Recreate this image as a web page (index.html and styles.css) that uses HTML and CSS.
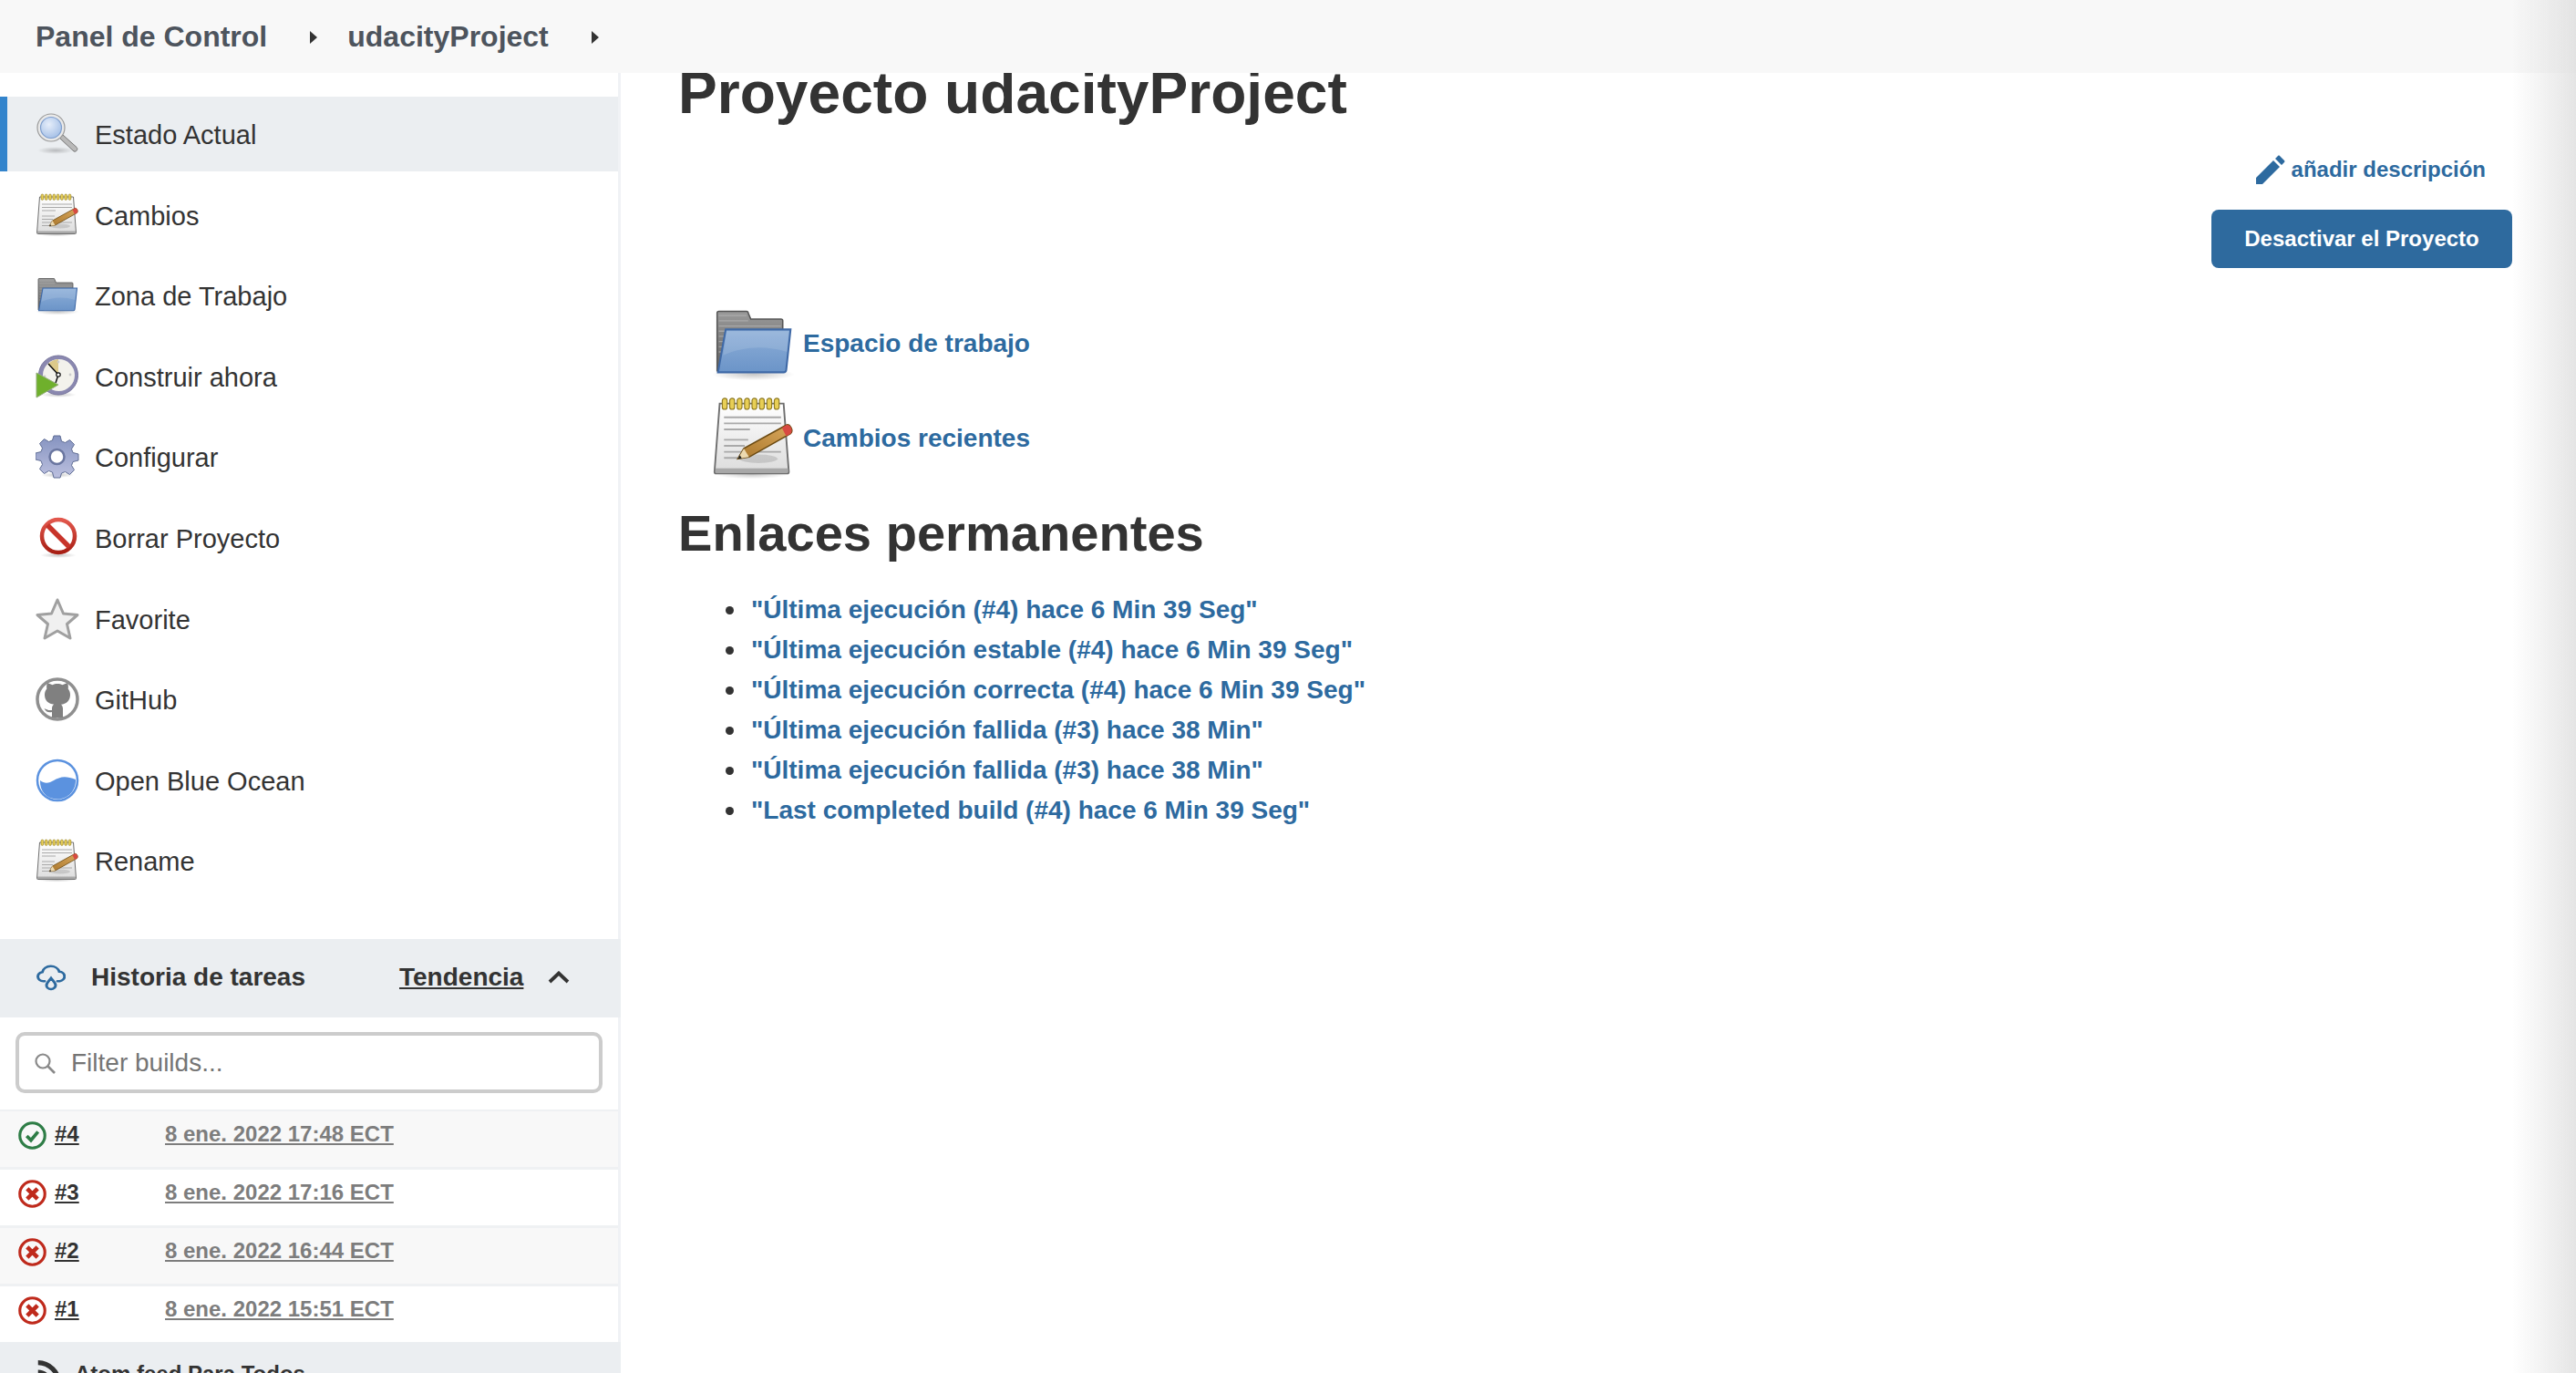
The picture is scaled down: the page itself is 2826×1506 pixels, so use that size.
FILE: index.html
```html
<!DOCTYPE html>
<html lang="es">
<head>
<meta charset="utf-8">
<title>udacityProject</title>
<link rel="stylesheet" href="styles.css">
</head>
<body>
<svg class="defs" width="0" height="0" aria-hidden="true">
  <defs>
    <linearGradient id="gFolder" x1="0" y1="0" x2="0" y2="1"><stop offset="0" stop-color="#8eafd8"/><stop offset="1" stop-color="#6b94c8"/></linearGradient>
    <linearGradient id="gBack" x1="0" y1="0" x2="0" y2="1"><stop offset="0" stop-color="#9a9a9a"/><stop offset="1" stop-color="#5f5f5f"/></linearGradient>
    <linearGradient id="gPaper" x1="0" y1="0" x2="0" y2="1"><stop offset="0" stop-color="#fff"/><stop offset="1" stop-color="#dcdcdc"/></linearGradient>
    <linearGradient id="gPencil" x1="0" y1="1" x2="1" y2="0"><stop offset="0" stop-color="#a9762c"/><stop offset="1" stop-color="#d9a85c"/></linearGradient>
    <linearGradient id="gGear" x1="0" y1="0" x2="0" y2="1"><stop offset="0" stop-color="#8593c0"/><stop offset="1" stop-color="#bcc0df"/></linearGradient>
    <linearGradient id="gRed" x1="0" y1="0" x2="0" y2="1"><stop offset="0" stop-color="#e2574c"/><stop offset="1" stop-color="#a81f14"/></linearGradient>
    <radialGradient id="gLens" cx=".4" cy=".35" r=".7"><stop offset="0" stop-color="#e6eefa"/><stop offset="1" stop-color="#a4bfe6"/></radialGradient>
    <radialGradient id="gShadow"><stop offset="0" stop-color="#000" stop-opacity=".22"/><stop offset="1" stop-color="#000" stop-opacity="0"/></radialGradient>
    <symbol id="i-notepad" viewBox="0 0 48 48">
      <ellipse cx="23" cy="45" rx="21" ry="2.6" fill="url(#gShadow)"/>
      <path d="M4.5 4h37l3 39.5a1 1 0 0 1-1 1H2.500a1 1 0 0 1-1-1z" fill="url(#gPaper)" stroke="#6f6f6f" stroke-width="1"/>
      <rect x="2" y="41.500" width="42" height="2.500" fill="#a8a8a8"/>
      <g fill="#e8cf55" stroke="#8f7a20" stroke-width=".6">
        <rect x="6" y="1" width="2.800" height="6.400" rx="1.400"/><rect x="10.300" y="1" width="2.800" height="6.400" rx="1.400"/><rect x="14.600" y="1" width="2.800" height="6.400" rx="1.400"/><rect x="18.900" y="1" width="2.800" height="6.400" rx="1.400"/><rect x="23.200" y="1" width="2.800" height="6.400" rx="1.400"/><rect x="27.500" y="1" width="2.800" height="6.400" rx="1.400"/><rect x="31.800" y="1" width="2.800" height="6.400" rx="1.400"/><rect x="36.100" y="1" width="2.800" height="6.400" rx="1.400"/>
      </g>
      <path d="M7 12h33M7 15.500h33M7 19h15M7 25h14M7 28.500h12M7 32h33M7 35.500h8" stroke="#a9a9a9" stroke-width="1" fill="none"/>
      <ellipse cx="27" cy="36" rx="11" ry="2.500" fill="#000" opacity=".12"/>
      <path d="M15 36l3.500-6L43 16.500c2-1 4.500 3 2.500 5L21.500 35z" fill="url(#gPencil)" stroke="#6b4a12" stroke-width=".8"/>
      <path d="M15 36l3.500-6 3 5z" fill="#ecd9b0"/>
      <path d="M15 36l1.200-2.100 1.100 1.800z" fill="#222"/>
      <path d="M40.500 18l2.500-1.500c2-1 4.500 3 2.500 5L43 23z" fill="#d84a42"/>
    </symbol>
    <symbol id="i-folder" viewBox="0 0 48 48">
      <ellipse cx="24" cy="42" rx="24" ry="3.500" fill="url(#gShadow)"/>
      <path d="M3 40V6.500a1 1 0 0 1 1-1h16a1 1 0 0 1 1 1l1.500 3.500h17.500a1 1 0 0 1 1 1V22L8 40.500z" fill="url(#gBack)" stroke="#555" stroke-width=".8"/>
      <path d="M4 8h16M4 11h17M4 14h36M4 17h36M4 20h36M4 23h24M4 26h18M4 29h10" stroke="#b5b5b5" stroke-width=".7" opacity=".7"/>
      <path d="M8 16h37.500L43 39.500a1.500 1.500 0 0 1-1.500 1.300H3.500z" fill="url(#gFolder)" stroke="#3f69a6" stroke-width="1.100"/>
      <path d="M8.500 17h36l-1 12C30 25 18 26 6.500 31z" fill="#fff" opacity=".12"/>
    </symbol>
    <symbol id="i-search-lens" viewBox="0 0 48 48">
      <ellipse cx="22" cy="42" rx="20" ry="4" fill="url(#gShadow)"/>
      <path d="M26 28l4-3 15 13.500c2 2 0 5.500-3 4.500z" fill="#b9b9b9" stroke="#777" stroke-width="1"/>
      <circle cx="17" cy="17" r="15" fill="#e9e9e9" stroke="#9a9a9a" stroke-width="1.200"/>
      <circle cx="17" cy="17" r="11.500" fill="url(#gLens)" stroke="#7f9fce" stroke-width="1.200"/>
    </symbol>
    <symbol id="i-check" viewBox="0 0 30 30"><circle cx="15" cy="15" r="13.300" fill="none" stroke="#2e7d46" stroke-width="3"/><path d="M9 15.500l4.500 4.500 7.500-9" fill="none" stroke="#2e7d46" stroke-width="3.600"/></symbol>
    <symbol id="i-cross" viewBox="0 0 30 30"><circle cx="15" cy="15" r="13.300" fill="none" stroke="#bf2a1c" stroke-width="3"/><path d="M9.500 9.500l11 11M20.500 9.500l-11 11" fill="none" stroke="#bf2a1c" stroke-width="4.400"/></symbol>
  </defs>
</svg>

<header class="topbar">
  <a class="crumb">Panel de Control</a>
  <span class="crumb-arrow"></span>
  <a class="crumb crumb-project">udacityProject</a>
  <span class="crumb-arrow"></span>
</header>

<div class="page">
  <aside class="side">
    <nav class="tasks">
      <a class="task task-active"><svg class="task-icon"><use href="#i-search-lens"/></svg><span>Estado Actual</span></a>
      <a class="task"><svg class="task-icon"><use href="#i-notepad"/></svg><span>Cambios</span></a>
      <a class="task"><svg class="task-icon"><use href="#i-folder"/></svg><span>Zona de Trabajo</span></a>
      <a class="task"><svg class="task-icon" viewBox="0 0 48 48">
        <ellipse cx="25" cy="44" rx="20" ry="3" fill="url(#gShadow)"/>
        <circle cx="25" cy="22.500" r="21.500" fill="#8a88b0" stroke="#77759c" stroke-width="1"/>
        <circle cx="25.500" cy="22.500" r="17.500" fill="#f3f2ec"/>
        <path d="M25 22L14 10a17 17 0 0 1 11-5z" fill="#dcc98a"/>
        <circle cx="10" cy="24" r="1.400" fill="#ccc"/><circle cx="38" cy="22" r="1.400" fill="#ccc"/><circle cx="25" cy="8" r="1.400" fill="#ccc"/>
        <path d="M25 22L14 10M25 22l-3 9" stroke="#111" stroke-width="1.500" fill="none"/>
        <circle cx="25" cy="22" r="2.200" fill="#fff" stroke="#111" stroke-width="1.200"/>
        <path d="M1 20l24 13L1 47z" fill="#6fb02c" stroke="#94ad7c" stroke-width="1"/>
      </svg><span>Construir ahora</span></a>
      <a class="task"><svg class="task-icon" viewBox="0 0 48 48">
        <ellipse cx="24" cy="44" rx="18" ry="3" fill="url(#gShadow)"/>
        <path d="M20 1h7l1.500 6 4 1.500 5-3 5 5-3 5 1.500 4 6 1.500v7l-6 1.500-1.500 4 3 5-5 5-5-3-4 1.500L27 47h-7l-1.500-6-4-1.500-5 3-5-5 3-5L6 28.500 0 27v-7l6-1.500L7.500 14.500l-3-5 5-5 5 3 4-1.500z" fill="url(#gGear)" stroke="#5f6d94" stroke-width="1"/>
        <circle cx="23.500" cy="24" r="8" fill="#fff" stroke="#6a76a0" stroke-width="2.500"/>
      </svg><span>Configurar</span></a>
      <a class="task"><svg class="task-icon" viewBox="0 0 48 48">
        <ellipse cx="25" cy="43" rx="20" ry="3" fill="url(#gShadow)"/>
        <circle cx="25" cy="22" r="18" fill="#fff" stroke="url(#gRed)" stroke-width="4.500"/>
        <path d="M13 10l24 24" stroke="#c8342a" stroke-width="5.500"/>
      </svg><span>Borrar Proyecto</span></a>
      <a class="task"><svg class="task-icon" viewBox="0 0 48 48">
        <path d="M24 3l6.500 15L46 19.500 34.500 29.500 38 45 24 37 10 45l3.500-15.500L2 19.500 17.500 18z" fill="#f0f0f0" stroke="#a0a0a0" stroke-width="3" stroke-linejoin="round"/>
      </svg><span>Favorite</span></a>
      <a class="task"><svg class="task-icon" viewBox="0 0 48 48">
        <circle cx="24" cy="24" r="22" fill="#fff" stroke="#8f8f8f" stroke-width="3.500"/>
        <path d="M24 7c2 0 4 .5 5.500 1.300L35 6c1 2 1 4.500.7 6.500 1.500 2 2.300 4 2.300 6.500 0 7-4.500 10-10 10.800 1.500 1.200 2 3 2 5V44H18v-6c-4 1-7-.5-8.500-4 2.500 1 4 2.500 8.500 2v-1.500c0-2 .5-3.500 2-5C14.500 29 10 26 10 19c0-2.500.8-4.500 2.300-6.500C12 10.500 12 8 13 6l5.500 2.300C20 7.500 22 7 24 7z" fill="#808080"/>
      </svg><span>GitHub</span></a>
      <a class="task"><svg class="task-icon" viewBox="0 0 48 48">
        <circle cx="24" cy="24" r="22" fill="#fff" stroke="#5b92df" stroke-width="2.500"/>
        <path d="M5 24c5 4 10 3 15 0 6-3.500 12-6 24-1 .5 12-8 21.500-20 21.500S4.500 36 5 24z" fill="#5b92df"/>
      </svg><span>Open Blue Ocean</span></a>
      <a class="task"><svg class="task-icon"><use href="#i-notepad"/></svg><span>Rename</span></a>
    </nav>

    <section class="history">
      <div class="history-head">
        <svg class="cloud" viewBox="0 0 32 36" preserveAspectRatio="none"><path d="M9 23H7.500a6 6 0 0 1-1-11.900A9.500 9.500 0 0 1 25 10.500a6.300 6.300 0 0 1 .5 12.500H23" fill="none" stroke="#2d6a9f" stroke-width="3" stroke-linecap="round"/><path d="M16 19c2.500 4 5 6.500 5 9.500a5 5 0 0 1-10 0c0-3 2.500-5.500 5-9.500z" fill="none" stroke="#2d6a9f" stroke-width="3"/></svg>
        <span class="history-title">Historia de tareas</span>
        <a class="trend">Tendencia</a>
        <svg class="chev" viewBox="0 0 24 14"><path d="M2 12L12 2.500 22 12" fill="none" stroke="#333" stroke-width="3.800"/></svg>
      </div>
      <div class="filter-wrap">
        <div class="filter">
          <svg class="filter-icon" viewBox="0 0 24 24"><circle cx="10" cy="10" r="7.500" fill="none" stroke="#8a8a8a" stroke-width="2.200"/><path d="M15.500 15.500L23 23" stroke="#8a8a8a" stroke-width="2.600"/></svg>
          <span class="filter-text">Filter builds...</span>
        </div>
      </div>
      <ul class="builds">
        <li class="build"><svg class="b-icon"><use href="#i-check"/></svg><a class="b-num">#4</a><a class="b-date">8 ene. 2022 17:48 ECT</a></li>
        <li class="build"><svg class="b-icon"><use href="#i-cross"/></svg><a class="b-num">#3</a><a class="b-date">8 ene. 2022 17:16 ECT</a></li>
        <li class="build"><svg class="b-icon"><use href="#i-cross"/></svg><a class="b-num">#2</a><a class="b-date">8 ene. 2022 16:44 ECT</a></li>
        <li class="build"><svg class="b-icon"><use href="#i-cross"/></svg><a class="b-num">#1</a><a class="b-date">8 ene. 2022 15:51 ECT</a></li>
      </ul>
      <div class="feed">
        <svg class="feed-icon" viewBox="0 0 32 32"><path d="M2 4c14 0 26 12 26 26" fill="none" stroke="#333" stroke-width="6"/><path d="M2 16c8 0 14 6 14 14" fill="none" stroke="#333" stroke-width="6"/></svg>
        <span>Atom feed Para Todos</span>
      </div>
    </section>
  </aside>

  <main class="main">
    <h1 class="title">Proyecto udacityProject</h1>
    <div class="actions">
      <a class="add-desc"><svg class="pencil" viewBox="0 0 32 32"><path d="M0 32v-7L19 6l7 7L7 32zM21 4l3-3c.6-.6 1.400-.6 2 0l5 5c.6.6.6 1.400 0 2l-3 3z" fill="#2d6a9f"/></svg><span>añadir descripción</span></a>
      <button class="disable" type="button">Desactivar el Proyecto</button>
    </div>
    <div class="links">
      <a class="big-link"><svg class="big-icon"><use href="#i-folder"/></svg><span>Espacio de trabajo</span></a>
      <a class="big-link"><svg class="big-icon"><use href="#i-notepad"/></svg><span>Cambios recientes</span></a>
    </div>
    <h2 class="perma-title">Enlaces permanentes</h2>
    <ul class="perma">
      <li><a>"Última ejecución (#4) hace 6 Min 39 Seg"</a></li>
      <li><a>"Última ejecución estable (#4) hace 6 Min 39 Seg"</a></li>
      <li><a>"Última ejecución correcta (#4) hace 6 Min 39 Seg"</a></li>
      <li><a>"Última ejecución fallida (#3) hace 38 Min"</a></li>
      <li><a>"Última ejecución fallida (#3) hace 38 Min"</a></li>
      <li><a>"Last completed build (#4) hace 6 Min 39 Seg"</a></li>
    </ul>
  </main>
</div>
<div class="edge-shade"></div>
</body>
</html>
```
FILE: styles.css
```css
* { box-sizing: border-box; }
html, body { margin: 0; height: 100%; }
body { overflow: hidden; background: #fff; color: #333; font-family: "Liberation Sans", Arial, sans-serif; }
.defs { position: absolute; }
a { color: inherit; }
ul { margin: 0; padding: 0; list-style: none; }

.topbar { height: 80px; background: #f8f8f8; display: flex; align-items: center; padding-left: 39px; padding-top: 1px; position: relative; z-index: 2; color: #4d545d; }
.crumb { font-size: 32px; font-weight: 700; }
.crumb-arrow { width: 0; height: 0; margin-left: 47px; border-left: 8px solid #333; border-top: 7.500px solid transparent; border-bottom: 7.500px solid transparent; }
.crumb-project { margin-left: 33px; }

.page { display: flex; height: calc(100vh - 80px); overflow: hidden; }
.side { width: 681px; flex: none; border-right: 3px solid #f0f2f5; display: flex; flex-direction: column; }
.tasks { padding-top: 26px; display: flex; flex-direction: column; gap: 6.600px; }
.task { height: 82px; display: flex; align-items: center; padding-left: 39px; font-size: 29px; color: #333; }
.task span { padding-top: 3px; }
.task-active { background: #ebeef1; border-left: 8px solid #3384cc; padding-left: 31px; }
.task-icon { width: 48px; height: 48px; flex: none; margin-right: 17px; }

.history { margin-top: 44.600px; }
.history-head { height: 86px; margin-right: -3px; background: #ebeef1; display: flex; align-items: center; padding-left: 40px; padding-bottom: 1px; font-size: 28px; font-weight: 700; }
.cloud { width: 32px; height: 30px; flex: none; margin-right: 28px; }
.history-title { width: 338px; flex: none; }
.trend { width: 163px; flex: none; text-decoration: underline; }
.chev { width: 24px; height: 14px; flex: none; }
.filter-wrap { padding: 16px 17px 18px 17px; }
.filter { height: 67px; border: 4px solid #ccc; border-radius: 10px; background: #fff; display: flex; align-items: center; padding-left: 16px; padding-top: 1px; }
.filter-icon { width: 24px; height: 24px; flex: none; margin-right: 17px; }
.filter-text { font-size: 28px; color: #757575; }
.builds { border-top: 2px solid #eff1f3; }
.build { height: 64px; display: flex; align-items: flex-start; padding: 11px 0 0 20px; font-size: 24px; border-bottom: 3px solid #eff1f3; }
.build:nth-child(odd) { background: #f8f8f8; }
.build:last-child { border-bottom: 0; height: 61px; }
.b-icon { width: 31px; height: 31px; flex: none; margin-right: 9px; }
.b-num { width: 121px; flex: none; font-weight: 700; text-decoration: underline; color: #333; }
.b-date { font-weight: 700; color: #7d7d7d; text-decoration: underline; }
.feed { height: 80px; margin-right: -3px; background: #ebeef1; display: flex; align-items: flex-start; padding: 21px 0 0 40px; font-size: 24px; font-weight: 700; gap: 14px; }
.feed-icon { width: 28px; height: 28px; flex: none; margin-top: -2px; }

.main { flex: 1; min-width: 0; padding-left: 63px; padding-right: 70px; }
.title { margin: -3px 0 0; font-size: 64.100px; line-height: 50px; font-weight: 700; color: #333; }
.actions { display: flex; flex-direction: column; align-items: flex-end; margin-top: 43px; }
.add-desc { display: flex; align-items: center; gap: 7px; font-size: 24px; font-weight: 700; color: #2d6a9f; margin-right: 29px; }
.pencil { width: 32px; height: 32px; flex: none; }
.disable { margin-top: 28px; width: 330px; height: 64px; border: 0; border-radius: 8px; background: #2e6a9e; color: #fff; font: 700 24px "Liberation Sans", Arial, sans-serif; }
.links { margin-top: 37px; padding-left: 37px; display: flex; flex-direction: column; gap: 13px; }
.big-link { display: flex; align-items: center; gap: 10px; font-size: 28px; font-weight: 700; color: #2d6a9f; }
.big-icon { width: 91px; height: 91px; flex: none; margin-right: -1px; }
.perma-title { margin: 27px 0 0; font-size: 56.100px; line-height: 64px; font-weight: 700; color: #333; }
.perma { margin-top: 30px; padding-left: 48px; list-style: none; }
.perma li { height: 44.100px; line-height: 44px; font-size: 28px; font-weight: 700; color: #2d6a9f; padding-left: 32px; position: relative; }
.perma li::before { content: ""; position: absolute; left: 4px; top: 18px; width: 9px; height: 9px; border-radius: 50%; background: #333; }

.edge-shade { position: fixed; top: 0; right: 0; bottom: 0; width: 70px; z-index: 3; pointer-events: none; background: linear-gradient(90deg, rgba(220,220,220,0), rgba(220,220,220,.75)); }
```
